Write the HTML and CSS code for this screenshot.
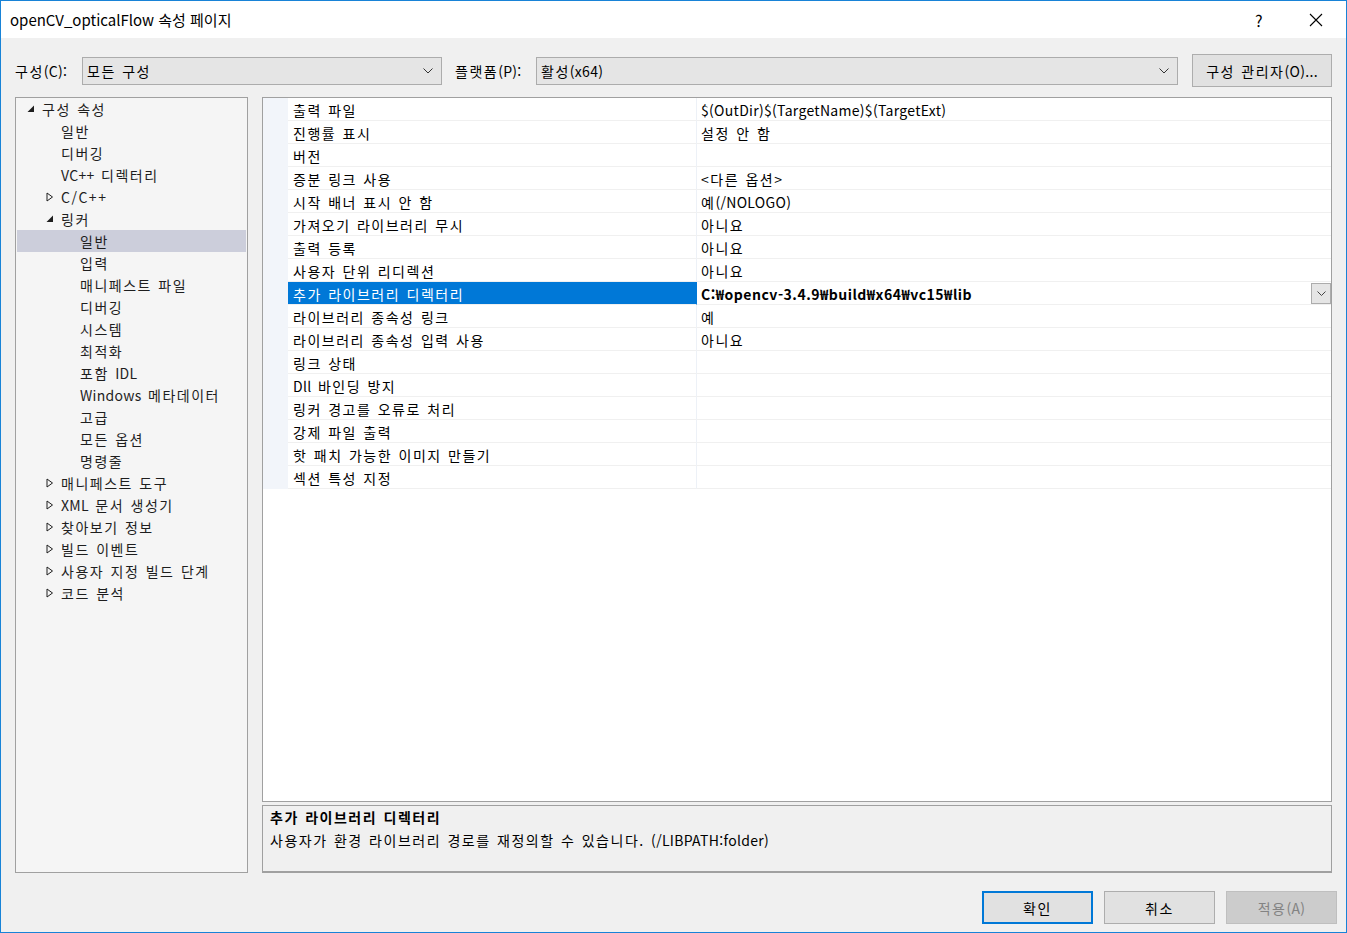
FILE: index.html
```html
<!DOCTYPE html>
<html lang="ko">
<head>
<meta charset="utf-8">
<title>openCV_opticalFlow 속성 페이지</title>
<link rel="stylesheet" href="styles.css">
</head>
<body>
<div class="window">
  <div class="titlebar">
    <span class="title">openCV_opticalFlow 속성 페이지</span>
    <span class="help">?</span>
    <span class="close"><svg width="14" height="14" viewBox="0 0 14 14"><path d="M1 1 L13 13 M13 1 L1 13" stroke="#000" stroke-width="1.1" fill="none"/></svg></span>
  </div>
  <div class="content">
    <div class="toolbar">
      <span class="lbl lbl-config">구성<span class="lat">(C):</span></span>
      <div class="combo combo-config"><span>모든 구성</span><svg class="chev" width="10" height="6" viewBox="0 0 10 6"><path d="M0.5 0.5 L5 5 L9.5 0.5" stroke="#333" fill="none"/></svg></div>
      <span class="lbl lbl-platform">플랫폼<span class="lat">(P):</span></span>
      <div class="combo combo-platform"><span>활성<span class="lat">(x64)</span></span><svg class="chev" width="10" height="6" viewBox="0 0 10 6"><path d="M0.5 0.5 L5 5 L9.5 0.5" stroke="#333" fill="none"/></svg></div>
      <button class="btn btn-manager">구성 관리자<span class="lat">(O)...</span></button>
    </div>
    <div class="main">
      <div class="tree">
        <div class="node l0"><span class="arrow"><svg width="8" height="8" viewBox="0 0 8 8"><polygon points="7,0.5 7,7 0.5,7" fill="#1e1e1e"/></svg></span><span>구성 속성</span></div>
        <div class="node l1"><span class="arrow"></span><span>일반</span></div>
        <div class="node l1"><span class="arrow"></span><span>디버깅</span></div>
        <div class="node l1"><span class="arrow"></span><span><span class="lat">VC++</span> 디렉터리</span></div>
        <div class="node l1"><span class="arrow"><svg width="8" height="10" viewBox="0 0 8 10"><polygon points="1,1 6.5,5 1,9" fill="none" stroke="#1e1e1e" stroke-width="1"/></svg></span><span>C/C++</span></div>
        <div class="node l1"><span class="arrow"><svg width="8" height="8" viewBox="0 0 8 8"><polygon points="7,0.5 7,7 0.5,7" fill="#1e1e1e"/></svg></span><span>링커</span></div>
        <div class="node l2 selected"><span class="arrow"></span><span>일반</span></div>
        <div class="node l2"><span class="arrow"></span><span>입력</span></div>
        <div class="node l2"><span class="arrow"></span><span>매니페스트 파일</span></div>
        <div class="node l2"><span class="arrow"></span><span>디버깅</span></div>
        <div class="node l2"><span class="arrow"></span><span>시스템</span></div>
        <div class="node l2"><span class="arrow"></span><span>최적화</span></div>
        <div class="node l2"><span class="arrow"></span><span>포함 <span class="lat">IDL</span></span></div>
        <div class="node l2"><span class="arrow"></span><span><span class="lat">Windows</span> 메타데이터</span></div>
        <div class="node l2"><span class="arrow"></span><span>고급</span></div>
        <div class="node l2"><span class="arrow"></span><span>모든 옵션</span></div>
        <div class="node l2"><span class="arrow"></span><span>명령줄</span></div>
        <div class="node l1"><span class="arrow"><svg width="8" height="10" viewBox="0 0 8 10"><polygon points="1,1 6.5,5 1,9" fill="none" stroke="#1e1e1e" stroke-width="1"/></svg></span><span>매니페스트 도구</span></div>
        <div class="node l1"><span class="arrow"><svg width="8" height="10" viewBox="0 0 8 10"><polygon points="1,1 6.5,5 1,9" fill="none" stroke="#1e1e1e" stroke-width="1"/></svg></span><span><span class="lat">XML</span> 문서 생성기</span></div>
        <div class="node l1"><span class="arrow"><svg width="8" height="10" viewBox="0 0 8 10"><polygon points="1,1 6.5,5 1,9" fill="none" stroke="#1e1e1e" stroke-width="1"/></svg></span><span>찾아보기 정보</span></div>
        <div class="node l1"><span class="arrow"><svg width="8" height="10" viewBox="0 0 8 10"><polygon points="1,1 6.5,5 1,9" fill="none" stroke="#1e1e1e" stroke-width="1"/></svg></span><span>빌드 이벤트</span></div>
        <div class="node l1"><span class="arrow"><svg width="8" height="10" viewBox="0 0 8 10"><polygon points="1,1 6.5,5 1,9" fill="none" stroke="#1e1e1e" stroke-width="1"/></svg></span><span>사용자 지정 빌드 단계</span></div>
        <div class="node l1"><span class="arrow"><svg width="8" height="10" viewBox="0 0 8 10"><polygon points="1,1 6.5,5 1,9" fill="none" stroke="#1e1e1e" stroke-width="1"/></svg></span><span>코드 분석</span></div>
      </div>
      <div class="right">
        <div class="grid">
          <div class="rows">
            <div class="row"><div class="gut"></div><div class="name">출력 파일</div><div class="val"><span class="lat">$(OutDir)$(TargetName)$(TargetExt)</span></div></div>
            <div class="row"><div class="gut"></div><div class="name">진행률 표시</div><div class="val">설정 안 함</div></div>
            <div class="row"><div class="gut"></div><div class="name">버전</div><div class="val"></div></div>
            <div class="row"><div class="gut"></div><div class="name">증분 링크 사용</div><div class="val">&lt;다른 옵션&gt;</div></div>
            <div class="row"><div class="gut"></div><div class="name">시작 배너 표시 안 함</div><div class="val"><span>예<span class="lat">(/NOLOGO)</span></span></div></div>
            <div class="row"><div class="gut"></div><div class="name">가져오기 라이브러리 무시</div><div class="val">아니요</div></div>
            <div class="row"><div class="gut"></div><div class="name">출력 등록</div><div class="val">아니요</div></div>
            <div class="row"><div class="gut"></div><div class="name">사용자 단위 리디렉션</div><div class="val">아니요</div></div>
            <div class="row sel"><div class="gut"></div><div class="name">추가 라이브러리 디렉터리</div><div class="val"><span class="bold">C:₩opencv-3.4.9₩build₩x64₩vc15₩lib</span><span class="dd"><svg width="9" height="5" viewBox="0 0 9 5"><path d="M0.5 0.5 L4.5 4.5 L8.5 0.5" stroke="#444" fill="none"/></svg></span></div></div>
            <div class="row"><div class="gut"></div><div class="name">라이브러리 종속성 링크</div><div class="val">예</div></div>
            <div class="row"><div class="gut"></div><div class="name">라이브러리 종속성 입력 사용</div><div class="val">아니요</div></div>
            <div class="row"><div class="gut"></div><div class="name">링크 상태</div><div class="val"></div></div>
            <div class="row"><div class="gut"></div><div class="name"><span class="lat">Dll</span>&nbsp;바인딩 방지</div><div class="val"></div></div>
            <div class="row"><div class="gut"></div><div class="name">링커 경고를 오류로 처리</div><div class="val"></div></div>
            <div class="row"><div class="gut"></div><div class="name">강제 파일 출력</div><div class="val"></div></div>
            <div class="row"><div class="gut"></div><div class="name">핫 패치 가능한 이미지 만들기</div><div class="val"></div></div>
            <div class="row"><div class="gut"></div><div class="name">섹션 특성 지정</div><div class="val"></div></div>
          </div>
        </div>
        <div class="desc">
          <div class="desc-title">추가 라이브러리 디렉터리</div>
          <div class="desc-text">사용자가 환경 라이브러리 경로를 재정의할 수 있습니다.&nbsp;<span class="lat">(/LIBPATH:folder)</span></div>
        </div>
      </div>
    </div>
    <div class="footer">
      <button class="btn btn-foot btn-ok">확인</button>
      <button class="btn btn-foot">취소</button>
      <button class="btn btn-foot btn-disabled">적용<span class="lat">(A)</span></button>
    </div>
  </div>
</div>
</body>
</html>
```
FILE: styles.css
```css
* { box-sizing: border-box; }
html, body { margin: 0; padding: 0; }
body {
  font-family: "Noto Sans CJK KR", "Noto Sans", sans-serif;
  font-size: 14px;
  letter-spacing: 1.5px;
  word-spacing: 1px;
  color: #000;
  background: #f0f0f0;
}
.lat { letter-spacing: 0.3px; word-spacing: 0; }
.window {
  width: 1347px;
  height: 933px;
  border: 1px solid #1883d7;
  display: flex;
  flex-direction: column;
  background: #f0f0f0;
}
.titlebar {
  height: 37px;
  background: #fff;
  display: flex;
  align-items: center;
  padding-left: 9px;
  flex: none;
  letter-spacing: 0;
  word-spacing: 0;
}
.title { font-size: 15px; flex: 1; }
.help { font-size: 16px; width: 54px; text-align: left; }
.close { width: 37px; display: flex; }

.content { flex: 1; display: flex; flex-direction: column; padding: 16px 14px 0 14px; }

.toolbar { display: flex; align-items: center; height: 33px; }
.lbl { font-size: 14px; }
.lbl-config { width: 67px; }
.lbl-platform { width: 81px; margin-left: 13px; }
.combo {
  height: 28px;
  background: #e5e5e5;
  border: 1px solid #acacac;
  display: flex;
  align-items: center;
  justify-content: space-between;
  padding: 0 8px 0 4px;
  font-size: 14px;
}
.combo-config { width: 360px; }
.combo-platform { width: 642px; }
.chev { flex: none; }
.btn {
  font-family: inherit;
  font-size: 14px;
  letter-spacing: inherit;
  word-spacing: inherit;
  background: #e1e1e1;
  border: 1px solid #adadad;
  color: #000;
  padding: 0;
}
.btn-manager { width: 140px; height: 33px; margin-left: 14px; }

.main { display: flex; gap: 14px; margin-top: 10px; height: 776px; }
.tree {
  width: 233px;
  background: #f5f5f5;
  border: 1px solid #a0a0a0;
  color: #1e1e1e;
}
.node { height: 22px; display: flex; align-items: center; white-space: nowrap; font-size: 14px; margin: 0 1px; }
.node .arrow { width: 17px; display: flex; align-items: center; justify-content: flex-start; flex: none; }
.node .arrow svg { margin-left: 2px; }
.l0 { padding-left: 8px; }
.l1 { padding-left: 27px; }
.l2 { padding-left: 46px; }
.node.selected { background: #cccedb; }

.right { flex: 1; display: flex; flex-direction: column; gap: 3px; }
.grid {
  height: 705px;
  background: #fff;
  border: 1px solid #a0a0a0;
}
.row { display: flex; height: 23px; }
.gut { width: 25px; background: #f2f5fa; flex: none; }
.name {
  width: 409px;
  flex: none;
  padding-left: 5px;
  padding-top: 1px;
  border-bottom: 1px solid #f0f0f0;
  border-right: 1px solid #edf1f7;
  display: flex; align-items: center;
  white-space: nowrap;
}
.val {
  flex: 1;
  padding-left: 4px;
  padding-top: 1px;
  border-bottom: 1px solid #f0f0f0;
  display: flex; align-items: center;
  justify-content: space-between;
  white-space: nowrap;
}
.row.sel .name { background: #0078d7; color: #fff; border-right-color: #0078d7; }
.bold { font-weight: bold; letter-spacing: 0.5px; }
.dd {
  width: 20px; height: 21px;
  background: #e5e5e5;
  border: 1px solid #acacac;
  display: flex; align-items: center; justify-content: center;
}

.desc {
  height: 68px;
  background: #f0f0f0;
  border: 1px solid #a0a0a0;
  border-bottom-width: 2px;
  padding: 0 7px;
}
.desc-title { font-weight: bold; height: 22px; display: flex; align-items: center; }
.desc-text { height: 23px; display: flex; align-items: center; }

.footer { display: flex; justify-content: flex-end; gap: 11px; margin-top: 18px; margin-right: -5px; }
.btn-foot { width: 111px; height: 33px; }
.btn-ok { border: 2px solid #0078d7; }
.btn-disabled { background: #cccccc; border-color: #bfbfbf; color: #838383; }
```
